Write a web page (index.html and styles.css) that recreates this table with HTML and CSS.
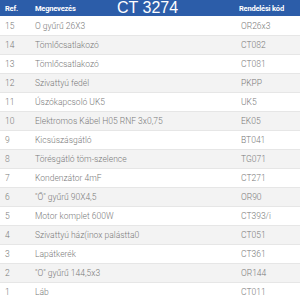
FILE: index.html
```html
<!DOCTYPE html>
<html>
<head>
<meta charset="utf-8">
<link rel="stylesheet" href="styles.css">
</head>
<body>
<div class="parts">
  <div class="head">
    <span class="c-ref">Ref.</span>
    <span class="c-name">Megnevezés</span>
    <span class="c-code">Rendelési kód</span>
    <span class="title">CT 3274</span>
  </div>
  <div class="row"><span class="c-ref">15</span><span class="c-name">O gyűrű 26X3</span><span class="c-code">OR26x3</span></div>
  <div class="row"><span class="c-ref">14</span><span class="c-name">Tömlőcsatlakozó</span><span class="c-code">CT082</span></div>
  <div class="row"><span class="c-ref">13</span><span class="c-name">Tömlőcsatlakozó</span><span class="c-code">CT081</span></div>
  <div class="row"><span class="c-ref">12</span><span class="c-name">Szivattyú fedél</span><span class="c-code">PKPP</span></div>
  <div class="row"><span class="c-ref">11</span><span class="c-name">Úszókapcsoló UK5</span><span class="c-code">UK5</span></div>
  <div class="row"><span class="c-ref">10</span><span class="c-name">Elektromos Kábel H05 RNF 3x0,75</span><span class="c-code">EK05</span></div>
  <div class="row"><span class="c-ref">9</span><span class="c-name">Kicsúszásgátló</span><span class="c-code">BT041</span></div>
  <div class="row"><span class="c-ref">8</span><span class="c-name">Törésgátló töm-szelence</span><span class="c-code">TG071</span></div>
  <div class="row"><span class="c-ref">7</span><span class="c-name">Kondenzátor 4mF</span><span class="c-code">CT271</span></div>
  <div class="row"><span class="c-ref">6</span><span class="c-name">"Ő" gyűrű 90X4,5</span><span class="c-code">OR90</span></div>
  <div class="row"><span class="c-ref">5</span><span class="c-name">Motor komplet 600W</span><span class="c-code">CT393/i</span></div>
  <div class="row"><span class="c-ref">4</span><span class="c-name">Szivattyú ház(inox palástta0</span><span class="c-code">CT051</span></div>
  <div class="row"><span class="c-ref">3</span><span class="c-name">Lapátkerék</span><span class="c-code">CT361</span></div>
  <div class="row"><span class="c-ref">2</span><span class="c-name">"O" gyűrű 144,5x3</span><span class="c-code">OR144</span></div>
  <div class="row"><span class="c-ref">1</span><span class="c-name">Láb</span><span class="c-code">CT011</span></div>
</div>
</body>
</html>
```
FILE: styles.css
```css
html, body {
  margin: 0;
  padding: 0;
  background: #ffffff;
}
.parts {
  width: 300px;
  font-family: Roboto, "Liberation Sans", sans-serif;
}
.head {
  position: relative;
  display: grid;
  grid-template-columns: 35px 1fr 61px;
  align-items: center;
  height: 16px;
  background: #2c5da9;
  color: #ffffff;
  font-size: 7.5px;
  font-weight: 700;
  letter-spacing: -0.2px;
}
.c-ref {
  padding-left: 5px;
}
.title {
  position: absolute;
  left: 117px;
  top: 0;
  line-height: 16px;
  font-family: "Liberation Sans", Arial, sans-serif;
  font-size: 16px;
  font-weight: 400;
  letter-spacing: 0;
}
.row {
  display: grid;
  grid-template-columns: 35px 1fr 59px;
  align-items: center;
  height: 18px;
  border-top: 1px solid #e6e6e6;
  color: #7a7a7a;
  font-size: 8.5px;
  font-weight: 300;
}
.head + .row {
  border-top: none;
  height: 19px;
}
.row:nth-child(odd) {
  background: #f3f3f3;
}
.row .c-name {
  padding-left: 0;
}
```
